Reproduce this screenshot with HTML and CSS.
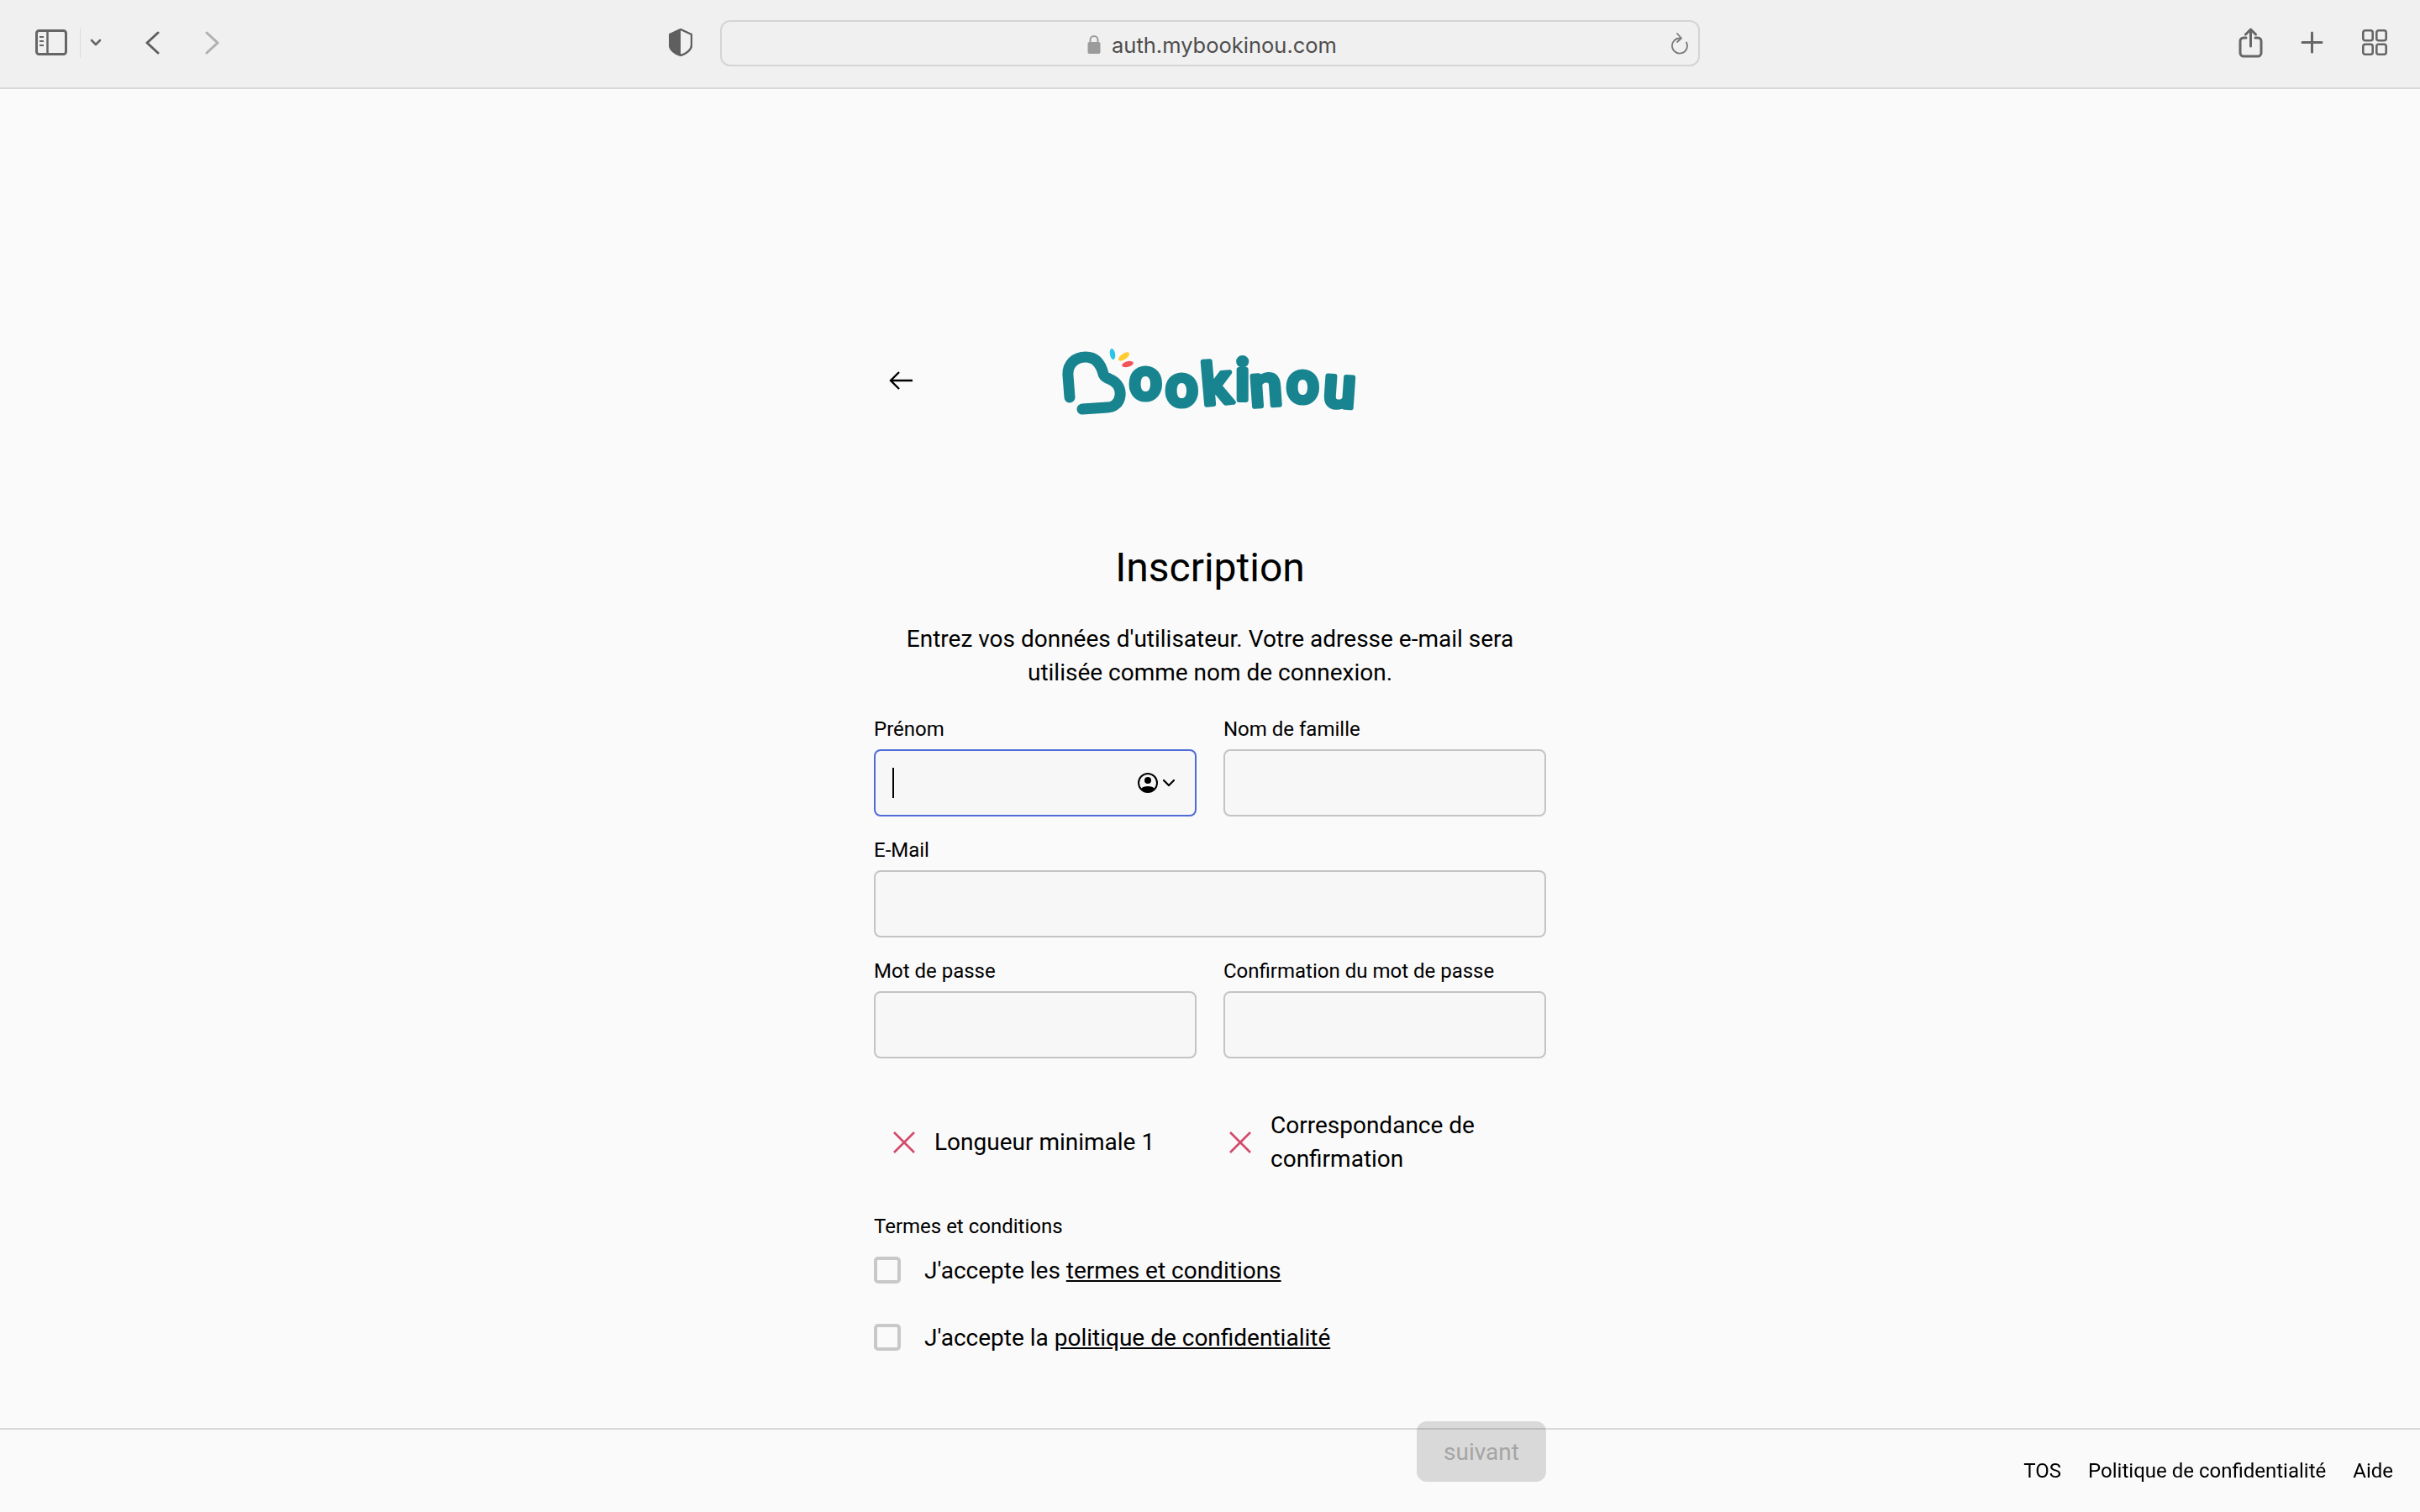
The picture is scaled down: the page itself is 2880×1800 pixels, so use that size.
FILE: index.html
```html
<!DOCTYPE html>
<html lang="fr">
<head>
    <meta charset="UTF-8">
    <meta name="viewport" content="width=device-width, initial-scale=1.0">
    <title>Bookinou - Inscription</title>
    <link rel="stylesheet" href="styles.css">
</head>
<body>

    <!-- Browser toolbar -->
    <div class="toolbar">
        <svg class="icon-sidebar" width="38" height="31" viewBox="0 0 38 31" fill="none" stroke="#666" stroke-width="3">
            <rect x="1.5" y="1.5" width="35" height="28" rx="3"/>
            <path d="M14.5 2v27" stroke-width="2.5"/>
            <path d="M5 9h5M5 14h5M5 19h5" stroke-width="2"/>
        </svg>
        <span class="toolbar-sep"></span>
        <svg class="icon-menu" width="14" height="9" viewBox="0 0 14 9" fill="none" stroke="#666" stroke-width="2.6" stroke-linecap="round" stroke-linejoin="round">
            <path d="M2 2l5 5 5-5"/>
        </svg>
        <svg class="icon-back" width="17" height="28" viewBox="0 0 17 28" fill="none" stroke="#5f5f5f" stroke-width="3" stroke-linecap="round" stroke-linejoin="round">
            <path d="M15 2L2 14l13 12"/>
        </svg>
        <svg class="icon-forward" width="17" height="28" viewBox="0 0 17 28" fill="none" stroke="#b0b0b0" stroke-width="3" stroke-linecap="round" stroke-linejoin="round">
            <path d="M2 2l13 12L2 26"/>
        </svg>
        <svg class="icon-shield" width="28" height="33" viewBox="0 0 28 33">
            <path d="M14 1L27 7v13c0 5-6 10-13 12C7 30 1 25 1 20V7z" fill="#f0f0f0" stroke="#5f5f5f" stroke-width="2.4" stroke-linejoin="round"/>
            <path d="M14 1L1 7v13c0 5 6 10 13 12z" fill="#5f5f5f"/>
        </svg>
        <div class="url-bar">
            <svg class="icon-lock" width="16" height="23" viewBox="0 0 16 23">
                <path d="M3.5 10V6.5a4.5 4.5 0 0 1 9 0V10" fill="none" stroke="#9b9b9b" stroke-width="2"/>
                <rect x="0.5" y="9" width="15" height="14" rx="2" fill="#9b9b9b"/>
            </svg>
            <span class="url-text">auth.mybookinou.com</span>
            <svg class="icon-reload" width="22" height="26" viewBox="0 0 22 26" fill="none" stroke="#7a7a7a" stroke-width="1.8" stroke-linecap="round" stroke-linejoin="round">
                <path d="M12 6.5a9 9 0 1 0 8 5"/>
                <path d="M9 1l5 5.5-5 4.5"/>
            </svg>
        </div>
        <svg class="icon-share" width="29" height="36" viewBox="0 0 29 36" fill="none" stroke="#666" stroke-width="3" stroke-linecap="round" stroke-linejoin="round">
            <path d="M9 12H6a4 4 0 0 0-4 4v14a4 4 0 0 0 4 4h17a4 4 0 0 0 4-4V16a4 4 0 0 0-4-4h-3"/>
            <path d="M14.5 22V2M8.5 8l6-6 6 6"/>
        </svg>
        <svg class="icon-plus" width="27" height="27" viewBox="0 0 27 27" fill="none" stroke="#666" stroke-width="3" stroke-linecap="round">
            <path d="M13.5 2v23M2 13.5h23"/>
        </svg>
        <svg class="icon-tabs" width="30" height="31" viewBox="0 0 30 31" fill="none" stroke="#666" stroke-width="2.6">
            <rect x="1.3" y="1.3" width="11.4" height="11.9" rx="2.5"/>
            <rect x="17.3" y="1.3" width="11.4" height="11.9" rx="2.5"/>
            <rect x="1.3" y="17.8" width="11.4" height="11.9" rx="2.5"/>
            <rect x="17.3" y="17.8" width="11.4" height="11.9" rx="2.5"/>
        </svg>
    </div>

    <div class="page">
        <div class="header">
            <svg class="back-arrow" width="28" height="22" viewBox="0 0 28 22" fill="none" stroke="#000" stroke-width="2.4">
                <path d="M28 11H3M12 1L2 11l10 10"/>
            </svg>
            <svg class="logo" width="380" height="100" viewBox="0 0 380 100" fill="none">
                <path d="M23 68L21 42C20 28 30 20 42 20C54 20 60 28 63 40C64 44 66 44 70 46C80 50 84 58 83 66C82 76 74 80 68 80L38 82" stroke="#17848f" stroke-width="13" stroke-linecap="round" stroke-linejoin="round"/>
                <ellipse cx="74" cy="16.5" rx="3.2" ry="6.5" transform="rotate(-10 74 16.5)" fill="#2ec4e6"/>
                <ellipse cx="87.5" cy="19.5" rx="7.5" ry="3.4" transform="rotate(-35 87.5 19.5)" fill="#ffcb2e"/>
                <ellipse cx="92" cy="28.5" rx="7" ry="3.4" transform="rotate(-15 92 28.5)" fill="#f2545b"/>
                <!-- each letter of the wordmark sits at its own place and tilt -->
                <text class="logo-text" x="94 137 182 220 239 281 324" y="70 78 77 71 79 74 78" rotate="0 0 -5 0 -4 0 4">ookinou</text>
            </svg>
        </div>

        <h1 class="title">Inscription</h1>
        <p class="intro">Entrez vos données d'utilisateur. Votre adresse e-mail sera utilisée comme nom de connexion.</p>

        <div class="fields">
            <div class="field">
                <label>Prénom</label>
                <div class="input input-focus">
                    <span class="caret"></span>
                    <svg width="46" height="24" viewBox="0 0 46 24" fill="none">
                        <circle cx="12" cy="12" r="11" stroke="#000" stroke-width="2"/>
                        <circle cx="12" cy="9" r="4" fill="#000"/>
                        <path d="M4 19c2-4 14-4 16 0c-2 5-14 5-16 0z" fill="#000"/>
                        <path d="M31 9l6 6 6-6" stroke="#000" stroke-width="2.2" stroke-linecap="round" stroke-linejoin="round"/>
                    </svg>
                </div>
            </div>
            <div class="field">
                <label>Nom de famille</label>
                <div class="input"></div>
            </div>
            <div class="field field-wide">
                <label>E-Mail</label>
                <div class="input"></div>
            </div>
            <div class="field">
                <label>Mot de passe</label>
                <div class="input"></div>
            </div>
            <div class="field">
                <label>Confirmation du mot de passe</label>
                <div class="input"></div>
            </div>
        </div>

        <div class="checks">
            <div class="check">
                <svg width="26" height="26" viewBox="0 0 26 26" fill="none" stroke="#d4496a" stroke-width="2.6"><path d="M1 1l24 24M25 1L1 25"/></svg>
                <span>Longueur minimale 1</span>
            </div>
            <div class="check">
                <svg width="26" height="26" viewBox="0 0 26 26" fill="none" stroke="#d4496a" stroke-width="2.6"><path d="M1 1l24 24M25 1L1 25"/></svg>
                <span>Correspondance de confirmation</span>
            </div>
        </div>

        <div class="terms">
            <label>Termes et conditions</label>
            <div class="terms-row"><span class="checkbox"></span><span>J'accepte les <a href="#">termes et conditions</a></span></div>
            <div class="terms-row"><span class="checkbox"></span><span>J'accepte la <a href="#">politique de confidentialité</a></span></div>
        </div>

        <div class="actions">
            <button class="next-btn" disabled>suivant</button>
        </div>
    </div>

    <div class="footer">
        <a href="#">TOS</a>
        <a href="#">Politique de confidentialité</a>
        <a href="#">Aide</a>
    </div>

</body>
</html>
```

FILE: styles.css
```css
* {
    box-sizing: border-box;
}

body {
    margin: 0;
    height: 1800px;
    overflow: hidden;
    font-family: 'Roboto', sans-serif;
    background: #fafafa;
    color: #000;
}

/* toolbar */
.toolbar {
    display: flex;
    align-items: center;
    height: 106px;
    padding: 0 39px 3px 42px;
    background: #f0f0f0;
    border-bottom: 2px solid #d8d8d8;
}

.toolbar-sep {
    width: 1px;
    height: 36px;
    margin-left: 15px;
    background: #dcdcdc;
}

.icon-menu { margin-left: 11px; }
.icon-back { margin-left: 52px; }
.icon-forward { margin-left: 54px; }
.icon-shield { margin-left: 535px; }
.icon-share { margin-left: 641px; }
.icon-plus { margin-left: 45px; }
.icon-tabs { margin-left: 46px; }

.url-bar {
    position: relative;
    display: flex;
    align-items: center;
    justify-content: center;
    gap: 13px;
    width: 1166px;
    height: 55px;
    margin-top: 2px;
    margin-left: 33px;
    padding-left: 5px;
    border: 2px solid #d4d4d4;
    border-radius: 12px;
}

.url-text {
    padding-top: 3px;
    font-family: 'Inter', sans-serif;
    font-size: 25.5px;
    color: #4d4d4d;
}

.icon-lock {
    margin-top: 2px;
}

.icon-reload {
    position: absolute;
    right: 12px;
    top: 13px;
}

/* page */
.page {
    width: 800px;
    margin: 0 auto;
    padding-top: 299px;
}

.header {
    display: flex;
    align-items: center;
    height: 100px;
}

.back-arrow {
    margin-left: 18px;
    margin-bottom: 4px;
}

.logo {
    margin-left: 164px;
}

.logo-text {
    font-family: 'Roboto', sans-serif;
    font-weight: 500;
    font-size: 68px;
    fill: #17848f;
    stroke: #17848f;
    stroke-width: 6px;
    stroke-linejoin: round;
    stroke-linecap: round;
}

.title {
    margin: 143px 0 0;
    font-size: 48px;
    font-weight: 400;
    line-height: 56px;
    text-align: center;
}

.intro {
    margin: 37px 20px 0;
    font-size: 28px;
    line-height: 40px;
    text-align: center;
}

label {
    display: block;
    font-size: 24px;
    line-height: 32px;
}

.fields {
    display: grid;
    grid-template-columns: 384px 384px;
    gap: 24px 32px;
    margin-top: 31px;
}

.field label {
    margin-bottom: 8px;
}

.field-wide {
    grid-column: 1 / 3;
}

.input {
    display: flex;
    align-items: center;
    justify-content: space-between;
    height: 80px;
    padding: 0 22px 0 20px;
    background: #f7f7f7;
    border: 2px solid #c4c4c4;
    border-radius: 8px;
}

.input-focus {
    border-color: #4f6bd6;
}

.caret {
    width: 2px;
    height: 36px;
    background: #000;
}

.checks {
    display: grid;
    grid-template-columns: 1fr 1fr;
    margin-top: 60px;
}

.check {
    display: flex;
    align-items: center;
    gap: 23px;
    padding-left: 23px;
    font-size: 28px;
    line-height: 40px;
}

.check svg {
    flex: none;
}

.terms {
    margin-top: 44px;
}

.terms-row {
    display: flex;
    align-items: center;
    gap: 28px;
    height: 40px;
    margin-top: 40px;
    font-size: 28px;
}

.terms label + .terms-row {
    margin-top: 16px;
}

.terms-row a {
    color: #000;
}

.checkbox {
    width: 32px;
    height: 32px;
    border: 4px solid #c8c8c8;
    border-radius: 5px;
}

.actions {
    display: flex;
    justify-content: flex-end;
    margin-top: 80px;
}

.next-btn {
    width: 154px;
    height: 72px;
    border: none;
    border-radius: 12px;
    background: #d9d9d9;
    color: #a5a5a5;
    font-family: 'Roboto', sans-serif;
    font-size: 28px;
    padding: 0;
}

/* footer sits on top of the page, the button goes under its line */
.footer {
    position: fixed;
    left: 0;
    right: 0;
    bottom: 0;
    display: flex;
    justify-content: flex-end;
    align-items: center;
    gap: 32px;
    height: 100px;
    padding: 0 32px;
    border-top: 2px solid rgba(0, 0, 0, 0.13);
    font-size: 24px;
}

.footer a {
    color: #000;
    text-decoration: none;
}
```
